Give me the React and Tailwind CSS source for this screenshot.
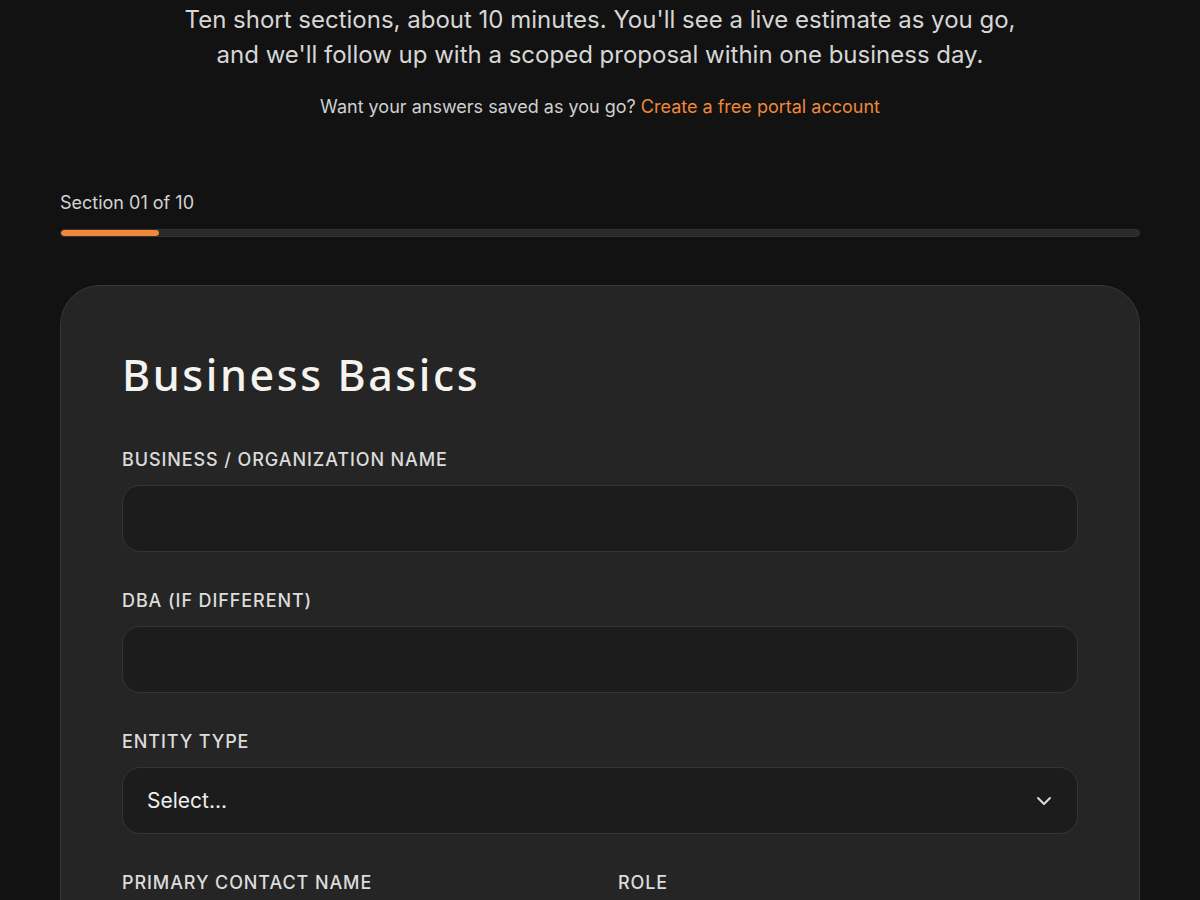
import React from "react";
import { ChevronDown } from "lucide-react";

const Label = ({ children }) => (
  <label className="block text-[18px] leading-6 font-medium uppercase tracking-[0.05em] text-[#dcdcdc] mb-[13px]">
    {children}
  </label>
);

const TextField = ({ label }) => (
  <div>
    <Label>{label}</Label>
    <input
      type="text"
      className="w-full h-[67px] rounded-[18px] bg-[#1c1c1c] border border-[#353535] px-6 text-[20px] text-[#eee] outline-none"
    />
  </div>
);

const App = () => {
  return (
    <div className="min-h-screen bg-[#121212] font-['Inter',sans-serif] text-[#e5e5e5] pb-20">
      {/* Intro */}
      <div className="pt-[2px] text-center">
        <p className="text-[24px] leading-[35px] text-[#d6d6d6]">
          Ten short sections, about 10 minutes. You'll see a live estimate as you go,
          <br />
          and we'll follow up with a scoped proposal within one business day.
        </p>
        <p className="mt-[22px] text-[18px] leading-[26px] text-[#d0d0d0]">
          Want your answers saved as you go?{" "}
          <a href="#" className="text-[#f0873a]">
            Create a free portal account
          </a>
        </p>
      </div>

      <div className="mx-[60px] mt-[71px]">
        {/* Progress */}
        <div className="text-[18px] leading-6 text-[#d4d4d4]">Section 01 of 10</div>
        <div className="mt-[14px] h-2 rounded-full bg-[#2a2a2a] border border-[#333] overflow-hidden">
          <div className="h-full w-[98px] rounded-full bg-[#f0873a]" />
        </div>

        {/* Card */}
        <div className="mt-[48px] rounded-[40px] bg-[#252525] border border-[#383838] px-[61px] pt-[62px] pb-16">
          <h2 className="font-['Noto_Sans',sans-serif] text-[43px] leading-[53px] font-medium text-[#f5f3ef] tracking-[0.06em]">
            Business Basics
          </h2>

          <div className="mt-[47px] flex flex-col gap-[37px]">
            <TextField label="Business / Organization Name" />
            <TextField label="DBA (if different)" />

            <div>
              <Label>Entity Type</Label>
              <div className="relative">
                <select className="w-full h-[67px] appearance-none rounded-[18px] bg-[#1c1c1c] border border-[#353535] pl-6 pr-12 text-[21px] text-[#ededed] outline-none">
                  <option>Select...</option>
                  <option>LLC</option>
                  <option>Corporation</option>
                  <option>Sole Proprietorship</option>
                </select>
                <ChevronDown
                  size={24}
                  strokeWidth={2}
                  className="absolute right-[22px] top-1/2 -translate-y-1/2 text-[#dcdcdc] pointer-events-none"
                />
              </div>
            </div>

            <div className="grid grid-cols-2 gap-x-9">
              <TextField label="Primary Contact Name" />
              <TextField label="Role" />
            </div>
          </div>
        </div>
      </div>
    </div>
  );
};

export default App;
